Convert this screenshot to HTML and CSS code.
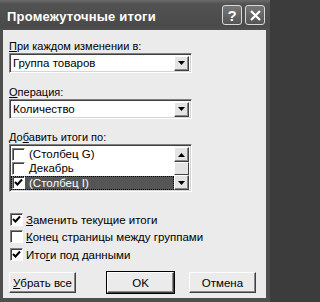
FILE: index.html
```html
<!DOCTYPE html>
<html lang="ru">
<head>
<meta charset="utf-8">
<link rel="stylesheet" href="styles.css">
</head>
<body>
<div class="window">
  <div class="titlebar">
    <span class="title">Промежуточные итоги</span>
    <div class="tbtns">
      <span class="tbtn">?</span>
      <span class="tbtn"><svg width="13" height="13" viewBox="0 0 13 13"><path d="M2 2 L11 11 M11 2 L2 11" stroke="#fff" stroke-width="2.2" fill="none"/></svg></span>
    </div>
  </div>
  <div class="content">
    <div class="label l1"><u>П</u>ри каждом изменении в:</div>
    <div class="combo">
      <span class="combo-text">Группа товаров</span>
      <span class="arrowbtn"><svg width="7" height="4" viewBox="0 0 7 4"><path d="M0 0 H7 L3.5 4 Z" fill="#000"/></svg></span>
    </div>
    <div class="label l2"><u>О</u>перация:</div>
    <div class="combo">
      <span class="combo-text">Количество</span>
      <span class="arrowbtn"><svg width="7" height="4" viewBox="0 0 7 4"><path d="M0 0 H7 L3.5 4 Z" fill="#000"/></svg></span>
    </div>
    <div class="label l3">До<u>б</u>авить итоги по:</div>
    <div class="listbox">
      <div class="rows">
        <div class="row"><span class="cb"></span><span class="rt">(Столбец G)</span></div>
        <div class="row"><span class="cb"></span><span class="rt">Декабрь</span></div>
        <div class="row sel"><span class="cb"><svg width="9" height="9" viewBox="0 0 9 9"><path d="M1 4 L3.5 6.5 L8 1.5" stroke="#000" stroke-width="2" fill="none"/></svg></span><span class="rt">(Столбец I)</span></div>
      </div>
      <div class="scroll">
        <span class="sbtn"><svg width="7" height="4" viewBox="0 0 7 4"><path d="M0 4 H7 L3.5 0 Z" fill="#000"/></svg></span>
        <span class="thumb"></span>
        <span class="sbtn"><svg width="7" height="4" viewBox="0 0 7 4"><path d="M0 0 H7 L3.5 4 Z" fill="#000"/></svg></span>
      </div>
    </div>
    <div class="checks">
      <div class="chk"><span class="cb"><svg width="9" height="9" viewBox="0 0 9 9"><path d="M1 4 L3.5 6.5 L8 1.5" stroke="#000" stroke-width="2" fill="none"/></svg></span><span><u>З</u>аменить текущие итоги</span></div>
      <div class="chk"><span class="cb"></span><span><u>К</u>онец страницы между группами</span></div>
      <div class="chk"><span class="cb"><svg width="9" height="9" viewBox="0 0 9 9"><path d="M1 4 L3.5 6.5 L8 1.5" stroke="#000" stroke-width="2" fill="none"/></svg></span><span>Ито<u>г</u>и под данными</span></div>
    </div>
    <div class="buttons">
      <span class="btn"><u>У</u>брать все</span>
      <span class="btn def">OK</span>
      <span class="btn">Отмена</span>
    </div>
  </div>
</div>
</body>
</html>
```
FILE: styles.css
```css
html, body {
  margin: 0;
  padding: 0;
  background: #3c3c3c;
}
.window {
  width: 270px;
  height: 302px;
  box-sizing: border-box;
  background: #4e4e4e;
  padding: 0 4px 4px 3px;
  display: flex;
  flex-direction: column;
  font-family: "Liberation Sans", Arial, sans-serif;
  font-size: 11px;
  color: #000;
}
.titlebar {
  height: 30px;
  flex: none;
  display: flex;
  align-items: center;
  justify-content: space-between;
  background: linear-gradient(#6a6a6a 0px, #525252 4px, #4a4a4a 26px, #505050 30px);
  margin: 0 -4px 0 -3px;
  padding: 0 5px 0 7px;
}
.title {
  color: #fff;
  font-weight: bold;
  font-size: 13px;
  letter-spacing: 0.2px;
  margin-top: 2px;
}
.tbtns {
  display: flex;
  gap: 3px;
}
.tbtn {
  width: 20px;
  height: 20px;
  box-sizing: border-box;
  border: 1px solid #d8d8d8;
  border-radius: 3px;
  background: linear-gradient(#777, #555);
  color: #fff;
  font-weight: bold;
  font-size: 15px;
  display: flex;
  align-items: center;
  justify-content: center;
}
.content {
  flex: 1;
  background: #ebebeb;
  padding: 10px 0 0 6px;
  display: flex;
  flex-direction: column;
}
.label {
  height: 13px;
  line-height: 13px;
}
.l2 { margin-top: 13px; }
.l3 { margin-top: 12px; }
.combo {
  width: 183px;
  height: 20px;
  box-sizing: border-box;
  background: #fff;
  border: 1px solid;
  border-color: #808080 #fff #fff #808080;
  box-shadow: inset 1px 1px 0 #404040, inset -1px -1px 0 #d4d4d4;
  display: flex;
  align-items: center;
  justify-content: space-between;
  padding: 0 2px 0 3px;
}
.combo-text {
  font-size: 11.5px;
}
.arrowbtn, .sbtn {
  width: 15px;
  height: 15px;
  box-sizing: border-box;
  background: #e4e4e4;
  border: 1px solid;
  border-color: #fff #404040 #404040 #fff;
  box-shadow: inset -1px -1px 0 #888;
  display: flex;
  align-items: center;
  justify-content: center;
}
.listbox {
  width: 183px;
  height: 48px;
  box-sizing: border-box;
  background: #fff;
  border: 1px solid;
  border-color: #808080 #fff #fff #808080;
  box-shadow: inset 1px 1px 0 #404040, inset -1px -1px 0 #d4d4d4;
  display: flex;
  padding: 1px 2px 1px 1px;
}
.rows {
  flex: 1;
  display: flex;
  flex-direction: column;
  padding-top: 1px;
}
.row {
  height: 15px;
  display: flex;
  align-items: center;
  gap: 4px;
  padding-left: 1px;
  font-size: 11.5px;
}
.row.sel {
  background: #555;
  color: #fff;
  outline: 1px dotted #000;
  outline-offset: -1px;
}
.cb {
  width: 13px;
  height: 13px;
  box-sizing: border-box;
  flex: none;
  background: #fff;
  border: 1px solid;
  border-color: #808080 #fff #fff #808080;
  box-shadow: inset 1px 1px 0 #404040;
  display: flex;
  align-items: center;
  justify-content: center;
}
.scroll {
  width: 15px;
  display: flex;
  flex-direction: column;
  background: #f0f0f0;
  padding-top: 1px;
}
.thumb {
  height: 13px;
  box-sizing: border-box;
  background: #e4e4e4;
  border: 1px solid;
  border-color: #fff #404040 #404040 #fff;
}
.checks {
  margin-top: 21px;
  display: flex;
  flex-direction: column;
  gap: 4px;
}
.chk {
  height: 13px;
  display: flex;
  align-items: center;
  gap: 3px;
  padding-left: 1px;
  font-size: 11.5px;
}
.chk:nth-child(3) { margin-top: 1px; }
.buttons {
  margin-top: 11px;
  display: flex;
}
.buttons .btn:nth-child(2) { margin-left: 31px; }
.buttons .btn:nth-child(3) { margin-left: 15px; }
.btn {
  width: 67px;
  height: 21px;
  box-sizing: border-box;
  background: #ebebeb;
  border: 1px solid;
  border-color: #fff #404040 #404040 #fff;
  box-shadow: inset -1px -1px 0 #888;
  display: flex;
  align-items: center;
  justify-content: center;
  font-size: 11.5px;
}
.btn.def {
  outline: 1px solid #000;
}
u {
  text-decoration: underline;
  text-underline-offset: 1px;
}
```
